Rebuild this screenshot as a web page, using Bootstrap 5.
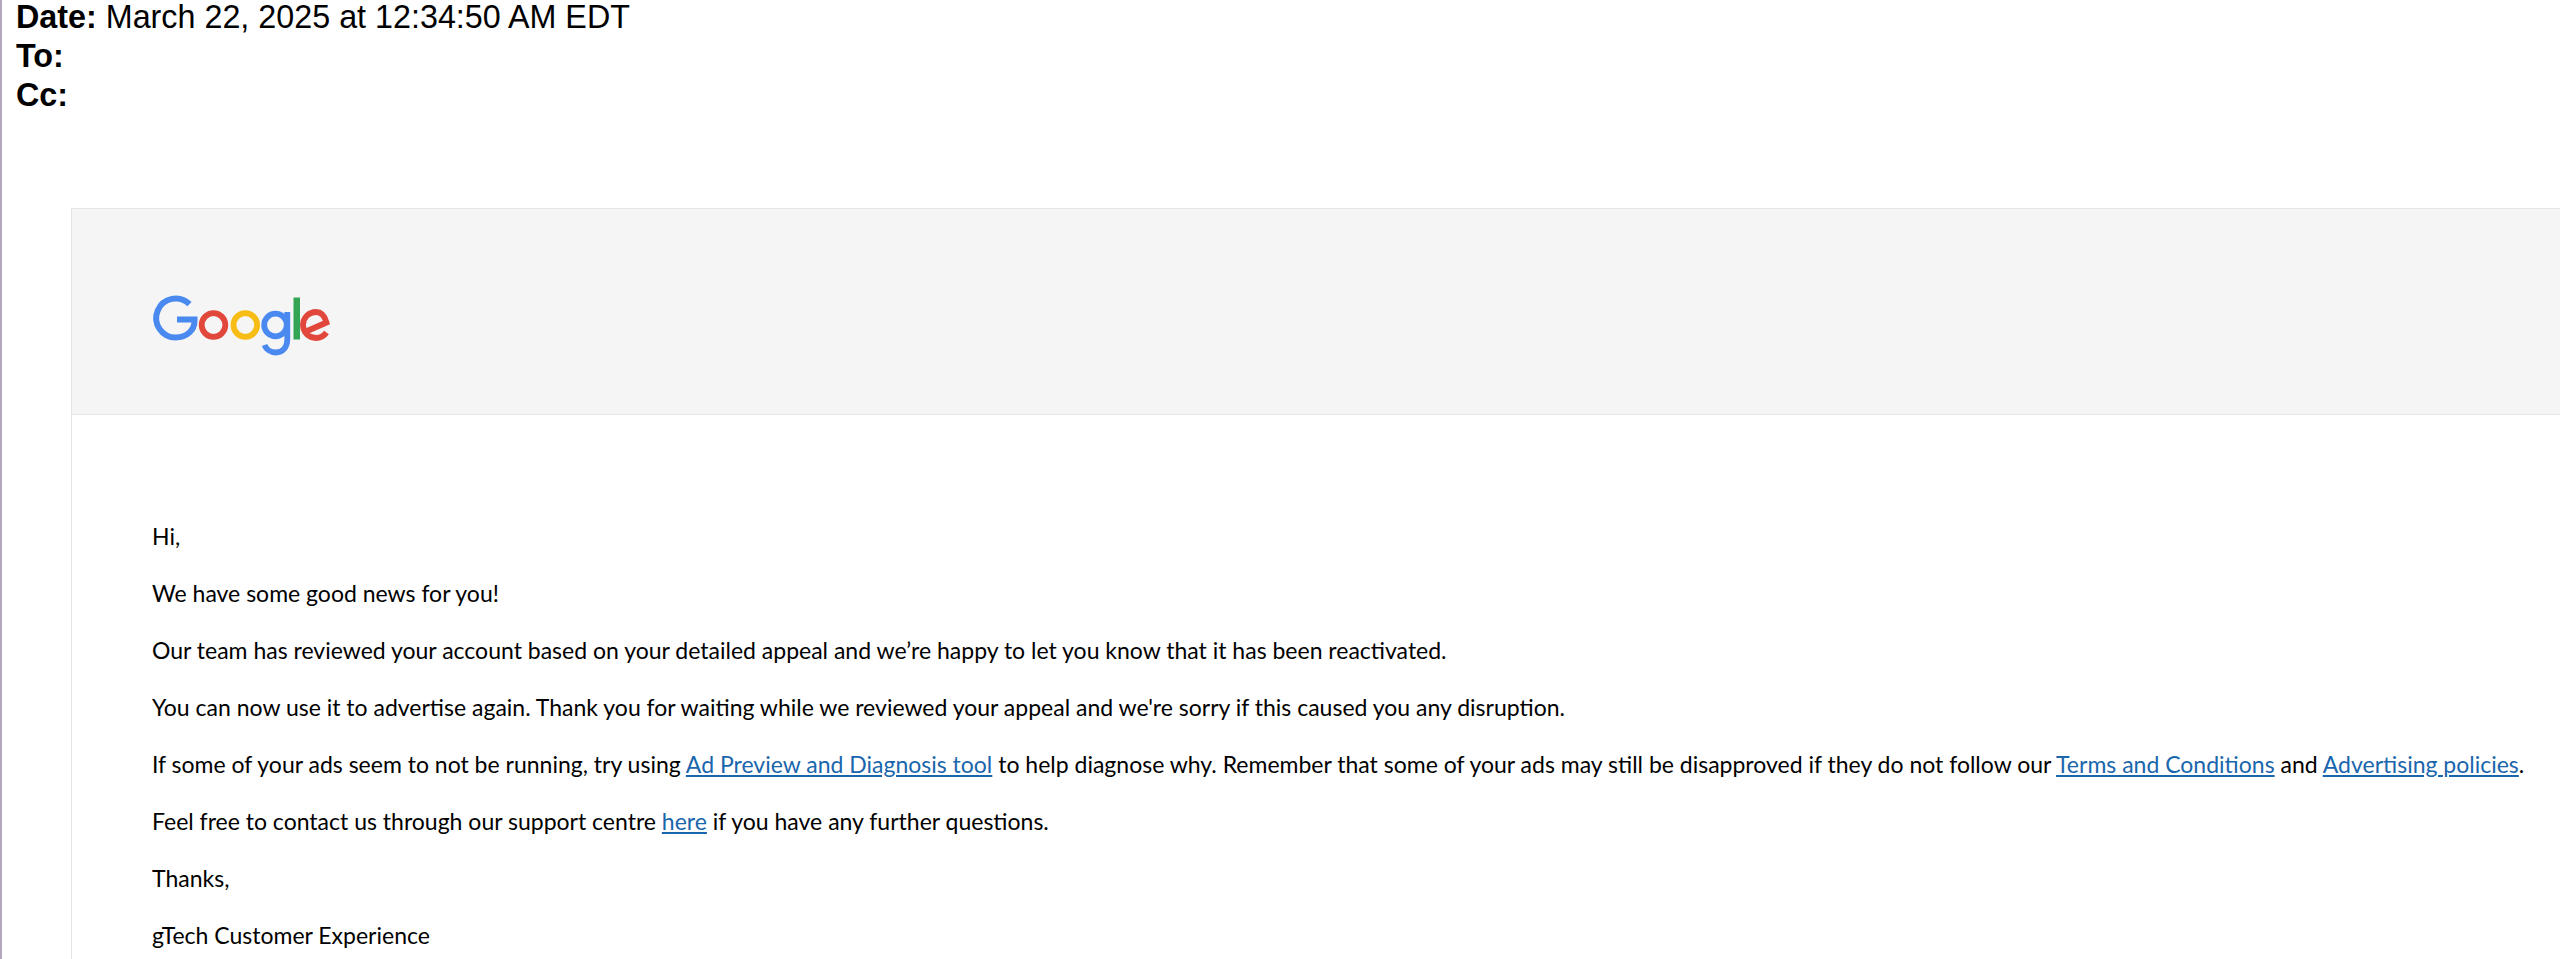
<!DOCTYPE html>
<html lang="en">
<head>
<meta charset="utf-8">
<title>Email</title>
<link rel="stylesheet" href="https://cdn.jsdelivr.net/npm/bootstrap@5.3.0/dist/css/bootstrap.min.css">
<style>
html,body{height:959px;overflow:hidden;background:#fff}
body{border-left:2px solid #b3a6bd;color:#000}
.mail-meta{font:32.3px/39px "Liberation Sans",Arial,sans-serif;padding:0 0 0 14px;height:208px;color:#000}
.mail-meta>div:first-child{margin-top:-2px}
.mail-meta b{font-weight:700}
.mail-panel{margin-left:69px;margin-right:-20px;height:751px;overflow:hidden;border:1px solid #e6e6e6;border-right:0;border-bottom:0}
.mail-top{height:206px;background:#f5f5f5;border-bottom:1px solid #e6e6e6;padding-left:58px;padding-top:61px}
.mail-logo{display:block;width:220px;height:100px;filter:blur(.7px)}
.mail-body{padding:106px 0 0 80px;font:23px/31px "Lato","Liberation Sans",sans-serif;color:#000;white-space:nowrap}
.mail-body p{margin:0 0 26px}
.mail-body a{color:#1a66ad;text-decoration:underline}
</style>
</head>
<body>
<div class="mail-meta d-flex flex-column">
<div><b>Date:</b> March 22, 2025 at 12:34:50 AM EDT</div>
<div><b>To:</b></div>
<div><b>Cc:</b></div>
</div>
<div class="mail-panel">
<div class="mail-top">
<svg class="mail-logo" viewBox="0 0 220 100" fill="none" aria-label="Google">
<path d="M59.500 34.200A19.500 19.500 0 1 0 45.700 67.500C57 67.500 64.500 60 64.500 51V49.500H47" stroke="#4a8af0" stroke-width="6"/>
<circle cx="83.500" cy="55" r="11.800" stroke="#e2473c" stroke-width="5.800"/>
<circle cx="115.300" cy="55" r="11.800" stroke="#f7bd14" stroke-width="5.800"/>
<circle cx="145.500" cy="55" r="11.300" stroke="#4a8af0" stroke-width="5.800"/>
<path d="M157.300 42V69C157.300 78 152 82.500 146 82.500C140 82.500 136 79 134.500 75" stroke="#4a8af0" stroke-width="5.800"/>
<rect x="163.500" y="27.500" width="6.500" height="42" fill="#33a555"/>
<path d="M176 61.500L196.500 52.500C194.500 45.500 191 42 186 42A13 13 0 0 0 186 68C190.500 68 194 66 196.500 62.500" stroke="#e2473c" stroke-width="5.800"/>
</svg>
</div>
<div class="mail-body">
<p>Hi,</p>
<p>We have some good news for you!</p>
<p>Our team has reviewed your account based on your detailed appeal and we’re happy to let you know that it has been reactivated.</p>
<p>You can now use it to advertise again. Thank you for waiting while we reviewed your appeal and we're sorry if this caused you any disruption.</p>
<p>If some of your ads seem to not be running, try using <a href="#">Ad Preview and Diagnosis tool</a> to help diagnose why. Remember that some of your ads may still be disapproved if they do not follow our <a href="#">Terms and Conditions</a> and <a href="#">Advertising policies</a>.</p>
<p>Feel free to contact us through our support centre <a href="#">here</a> if you have any further questions.</p>
<p>Thanks,</p>
<p>gTech Customer Experience</p>
</div>
</div>
<script src="https://cdn.jsdelivr.net/npm/bootstrap@5.3.0/dist/js/bootstrap.bundle.min.js"></script>
</body>
</html>
